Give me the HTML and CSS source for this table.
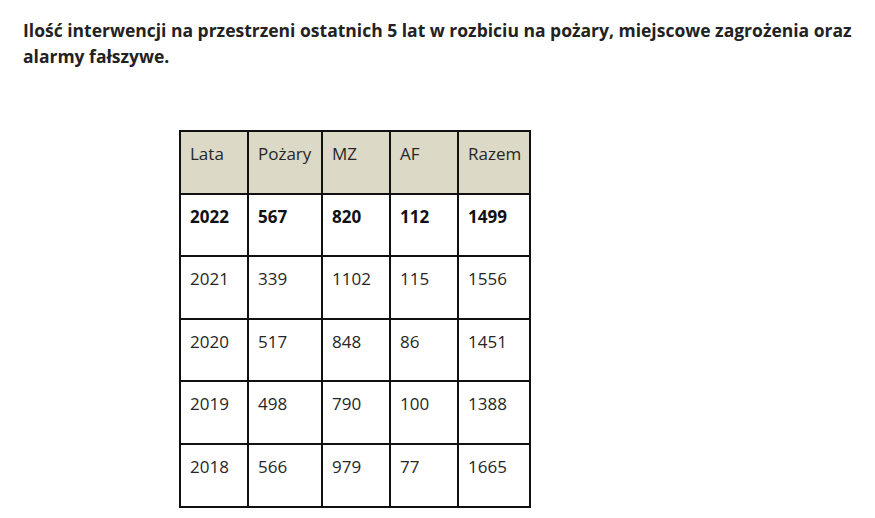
FILE: index.html
```html
<!DOCTYPE html>
<html lang="pl">
<head>
<meta charset="utf-8">
<link rel="stylesheet" href="styles.css">
</head>
<body>
<div class="page">
  <p class="title">Ilość interwencji na przestrzeni ostatnich 5 lat w rozbiciu na pożary, miejscowe zagrożenia oraz alarmy fałszywe.</p>
  <table class="stats">
    <colgroup>
      <col class="c1"><col class="c2"><col class="c3"><col class="c4"><col class="c5">
    </colgroup>
    <thead>
      <tr><th>Lata</th><th>Pożary</th><th>MZ</th><th>AF</th><th>Razem</th></tr>
    </thead>
    <tbody>
      <tr class="bold"><td>2022</td><td>567</td><td>820</td><td>112</td><td>1499</td></tr>
      <tr><td>2021</td><td>339</td><td>1102</td><td>115</td><td>1556</td></tr>
      <tr><td>2020</td><td>517</td><td>848</td><td>86</td><td>1451</td></tr>
      <tr><td>2019</td><td>498</td><td>790</td><td>100</td><td>1388</td></tr>
      <tr><td>2018</td><td>566</td><td>979</td><td>77</td><td>1665</td></tr>
    </tbody>
  </table>
</div>
</body>
</html>
```

FILE: styles.css
```css
html, body {
  margin: 0;
  padding: 0;
  background: #fff;
}
.page {
  padding: 17px 10px 0 23px;
  font-family: "Open Sans", "Liberation Sans", sans-serif;
}
.title {
  margin: 0;
  font-size: 17.5px;
  font-weight: 700;
  line-height: 26px;
  color: #222;
}
.stats {
  margin: 61px 0 0 156px;
  border-collapse: collapse;
  table-layout: fixed;
  width: 350px;
  font-size: 17px;
  color: #262626;
}
.c1 { width: 68px; }
.c2 { width: 74px; }
.c3 { width: 68px; }
.c4 { width: 68px; }
.c5 { width: 72px; }
.stats th, .stats td {
  border: 2px solid #111;
  height: 62.6px;
  box-sizing: border-box;
  padding: 9px 8px 0 9px;
  vertical-align: top;
  text-align: left;
  font-weight: 400;
  line-height: 26px;
  white-space: nowrap;
}
.stats th {
  background: #dcd9c6;
}
.stats .bold td {
  font-weight: 700;
  color: #111;
}
```
